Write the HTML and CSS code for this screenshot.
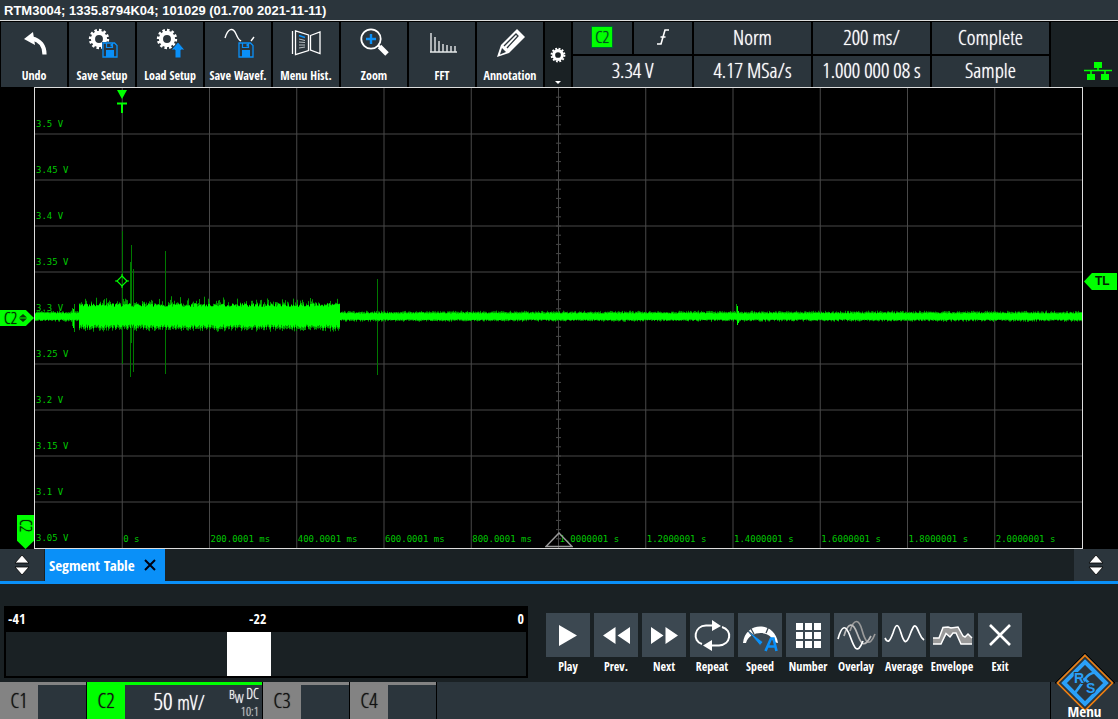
FILE: index.html
```html
<!DOCTYPE html>
<html lang="en">
<head>
<meta charset="utf-8">
<meta name="viewport" content="width=device-width, initial-scale=1">
<title>RTM3004 Oscilloscope</title>
<link rel="stylesheet" href="styles.css">
</head>
<body>
<svg class="defs" aria-hidden="true">
  <symbol id="gear" viewBox="0 0 24 24">
    <circle cx="12" cy="12" r="6.6" fill="none" stroke="currentColor" stroke-width="4.6"/>
    <circle cx="12" cy="12" r="9.6" fill="none" stroke="currentColor" stroke-width="3" pathLength="24" stroke-dasharray="1.1 .9"/>
  </symbol>
  <symbol id="floppy" viewBox="0 0 16 16">
    <rect width="16" height="16" class="plate"/>
    <path d="M1 1h11.500l2.500 2.500v11.500h-14z" fill="none" stroke="#0a90f8" stroke-width="1.300"/>
    <path d="M4.500 1v4.500h6v-4.500" fill="none" stroke="#0a90f8" stroke-width="1.200"/>
    <path d="M4 8h8v7h-8z" fill="#0a90f8"/>
    <path d="M8.500 2h1.500v2.500h-1.500z" fill="#0a90f8"/>
  </symbol>
  <symbol id="updown" viewBox="0 0 16 22">
    <path d="M8 1L15 9H1zM8 21L15 13H1z" fill="#fff" stroke="#000" stroke-width=".8"/>
  </symbol>
</svg>

<header class="title">RTM3004; 1335.8794K04; 101029 (01.700 2021-11-11)</header>

<nav class="toolbar">
  <button class="tool"><svg viewBox="0 0 66 44"><path d="M23 17L32 10L34 23z" fill="#fff"/><path d="M31 16.500C39 18 43.500 24 43.500 32.500" fill="none" stroke="#fff" stroke-width="4.200"/></svg>Undo</button>
  <button class="tool"><svg viewBox="0 0 66 44"><use href="#gear" x="19" y="6" width="22" height="22"/><use href="#floppy" x="33" y="20" width="16" height="16"/></svg>Save Setup</button>
  <button class="tool"><svg viewBox="0 0 66 44"><use href="#gear" x="19" y="6" width="22" height="22"/><path d="M41 20L48 28H44V36H38V28H34z" fill="#0a90f8" stroke="#2b353c" stroke-width="1"/></svg>Load Setup</button>
  <button class="tool"><svg viewBox="0 0 66 44"><path d="M20 16C23 6 28 5 31 12S35 18 36 19M46 19L49 15" fill="none" stroke="#fff" stroke-width="1.400"/><use href="#floppy" x="33" y="20" width="16" height="16"/></svg>Save Wavef.</button>
  <button class="tool"><svg viewBox="0 0 66 44"><path d="M19.500 9V32M22.500 9V32.500L35.500 28.500V13zM37.500 13.500L47 10V31.500L37.500 28z" fill="none" stroke="#fff" stroke-width="1.300"/><path d="M26 17l6 1.500M26 20l6 .5M26 23h6M26 26l6-1" stroke="#b8c0c4" stroke-width="1"/><path d="M26 13.500l6 2" stroke="#0a90f8" stroke-width="1.400"/></svg>Menu Hist.</button>
  <button class="tool"><svg viewBox="0 0 66 44"><circle cx="30" cy="17" r="9.700" fill="none" stroke="#fff" stroke-width="1.800"/><path d="M30 12v10M25 17h10" stroke="#0a90f8" stroke-width="2.400"/><path d="M37 23L39.500 25.500" stroke="#fff" stroke-width="2"/><path d="M38.500 24.500L46 32" stroke="#fff" stroke-width="5"/></svg>Zoom</button>
  <button class="tool"><svg viewBox="0 0 66 44"><path d="M21 30H48M22 11V30M26 15V30M30 19V30M34 22V30M38 23V30M42 24V30M46 24V30" stroke="#e4e7e8" stroke-width="1.400"/></svg>FFT</button>
  <button class="tool"><svg viewBox="0 0 66 44"><path d="M40 7L48 15L32 31L20 35L24 23z" fill="#fff"/><path d="M27 24L39 12L41 14L30 26" fill="none" stroke="#2b353c" stroke-width="1.300"/><path d="M25 26L29 30L23 32.500z" fill="#2b353c"/></svg>Annotation</button>
  <button class="config" aria-label="Configure toolbar"><svg viewBox="0 0 26 64"><use href="#gear" x="5" y="24" width="16" height="16"/><path d="M10 58h6l-3 3z" fill="#fff"/></svg></button>
  <div class="status">
    <button><span class="chip">C2</span></button>
    <button aria-label="Rising edge"><svg viewBox="0 0 14 18" class="edge"><path d="M1 16H5L9 2H13M4.500 9h5" fill="none" stroke="#fff" stroke-width="1.600"/></svg></button>
    <button>Norm</button>
    <button>200 ms/</button>
    <button>Complete</button>
    <button class="level">3.34 V</button>
    <button>4.17 MSa/s</button>
    <button>1.000 000 08 s</button>
    <button>Sample</button>
  </div>
  <div class="network"><svg viewBox="0 0 28 20" role="img" aria-label="Network connected"><path d="M10 1h8v6h-8zM3 13h8v6h-8zM17 13h8v6h-8z" fill="#0f0"/><path d="M0 9.500H28M14 6v4M7 9v5M21 9v5" stroke="#0f0" stroke-width="1.600"/></svg></div>
</nav>

<main class="scope">
  <div class="gutter">
    <div class="marker channel">C2<svg viewBox="0 0 8 8"><path d="M0 3.500h8l-4-3.500zM0 4.500h8l-4 3.500z" fill="#063c06"/></svg></div>
    <div class="marker offset">C2</div>
  </div>
  <div class="plot">
    <svg class="grid" id="grid"></svg>
    <div class="volts"><span>3.5 V</span><span>3.45 V</span><span>3.4 V</span><span>3.35 V</span><span>3.3 V</span><span>3.25 V</span><span>3.2 V</span><span>3.15 V</span><span>3.1 V</span><span>3.05 V</span></div>
    <div class="times"><span></span><span>0 s</span><span>200.0001 ms</span><span>400.0001 ms</span><span>600.0001 ms</span><span>800.0001 ms</span><span>1.0000001 s</span><span>1.2000001 s</span><span>1.4000001 s</span><span>1.6000001 s</span><span>1.8000001 s</span><span>2.0000001 s</span></div>
    <svg class="wave" viewBox="0 0 1047 460" preserveAspectRatio="none"><path id="dim"/><path id="spikes"/><path id="bright"/></svg>
    <svg class="pin trigger" viewBox="0 0 12 24"><path d="M1 1H11L6 10z" fill="#0f0"/><path d="M1 14.500H11M6 14V24" stroke="#0f0" stroke-width="2"/></svg>
    <svg class="pin point" viewBox="0 0 14 14"><path d="M7 2L12 7L7 12L2 7z" fill="none" stroke="#0f0" stroke-width="1.200"/><path d="M0 7h3M11 7h3M7 0v3M7 11v3" stroke="#0f0"/></svg>
    <svg class="pin reference" viewBox="0 0 28 16"><path d="M14 1L27 14.500H1z" fill="none" stroke="#999" stroke-width="1.500"/></svg>
  </div>
  <div class="gutter">
    <div class="marker level-mark">TL</div>
  </div>
</main>

<div class="tabs">
  <button class="updown" aria-label="Resize panel"><svg><use href="#updown"/></svg></button>
  <button class="tab">Segment Table<svg viewBox="0 0 12 12"><path d="M1 1L11 11M11 1L1 11" stroke="#001" stroke-width="2"/></svg></button>
  <button class="updown last" aria-label="Expand panel"><svg><use href="#updown"/></svg></button>
</div>

<section class="panel">
  <div class="segments">
    <div class="scale"><label for="segment">-41</label><div><output for="segment">-22</output><span>0</span></div></div>
    <input id="segment" type="range" min="-41" max="0" value="-22">
  </div>
  <div class="actions">
    <button><svg viewBox="0 0 44 44"><path d="M13 12L31 22.500L13 33z" fill="#fff"/></svg>Play</button>
    <button><svg viewBox="0 0 44 44"><path d="M9 22.500L21.500 14V31zM23.500 22.500L36 14V31z" fill="#fff"/></svg>Prev.</button>
    <button><svg viewBox="0 0 44 44"><path d="M9 14L21.500 22.500L9 31zM23.500 14L36 22.500L23.500 31z" fill="#fff"/></svg>Next</button>
    <button><svg viewBox="0 0 44 44"><path d="M12 31C2 28 4 13 16 12.500H24M32 14C43 17 41 32 29 32.500H21" fill="none" stroke="#fff" stroke-width="2"/><path d="M22 7L31 13L22 18zM22 27L13 32.500L22 38z" fill="#fff"/></svg>Repeat</button>
    <button><svg viewBox="0 0 44 44"><path d="M5 30C7 8 37 8 40 30L35.500 29C33 17 12 17 8 30z" fill="#fff"/><path d="M12 14l4 7M28 20l3-7" stroke="#3c4851" stroke-width="1.300"/><path d="M9 17L25 29L22 32.500z" fill="#0a90f8" stroke="#3c4851" stroke-width=".8"/><path d="M27.500 38L33 25.500H35.500L38.500 38M30 33.500H37" fill="none" stroke="#0a90f8" stroke-width="2.600"/></svg>Speed</button>
    <button><svg viewBox="0 0 44 44"><path d="M10 10h7v7h-7zM19 10h7v7h-7zM28 10h7v7h-7zM10 19h7v7h-7zM19 19h7v7h-7zM28 19h7v7h-7zM10 28h7v7h-7zM19 28h7v7h-7zM28 28h7v7h-7z" fill="#fff"/></svg>Number</button>
    <button><svg viewBox="0 0 44 44"><g fill="none" stroke-width="1.700"><path d="M16 18C20 5 25 6 28 17S35 36 41 21" stroke="#9a9a9a"/><path d="M10 23C14 9 19 9 23 20S30 36 37 23" stroke="#bbb"/><path d="M4 26C8 11 12 12 16 23S23 43 29 28" stroke="#fff"/></g></svg>Overlay</button>
    <button><svg viewBox="0 0 44 44"><path d="M3 25C6 31 8 28 11 20C14 10 16 10 19 20S24 31 27 24S32 9 35 15S38 24 42 27" fill="none" stroke="#fff" stroke-width="1.700"/></svg>Average</button>
    <button><svg viewBox="0 0 44 44"><path d="M3 25H9L13 14H28L33 23L35 24L38 21L42 25V31H31L26 20H23L20 24L17 21L11 31H3z" fill="#999"/><path d="M3 25H9L13 14.500L18 14L21 15L28 14L33 23L35 24L38 21L42 25M3 31H11L16 20.500L20 24L23 20H26L31 31H42" fill="none" stroke="#fff" stroke-width="1.500"/></svg>Envelope</button>
    <button><svg viewBox="0 0 44 44"><path d="M12 12L32 32M32 12L12 32" stroke="#fff" stroke-width="2.600"/></svg>Exit</button>
  </div>
</section>

<footer class="channels">
  <button class="channel-cell"><b>C1</b></button>
  <button class="channel-cell active"><b>C2</b><span class="vdiv">50 <small>mV/</small></span><span class="coupling"><span><span class="band">B<sub>W</sub></span> DC</span><span class="probe">10:1</span></span></button>
  <button class="channel-cell"><b>C3</b></button>
  <button class="channel-cell"><b>C4</b></button>
  <button class="menu"><svg viewBox="0 0 60 60"><path d="M30 0L60 30H0z" fill="#2b353c" stroke="#000"/><path d="M30 2.500L57.500 30L30 57.500L2.500 30z" fill="#2b353c" stroke="#f08010" stroke-width="1.600"/><path d="M30 9L51 30L30 51L9 30z" fill="#2b353c" stroke="#2aa0f8" stroke-width="4"/><path d="M19.500 19.500Q24 24 29 26T40.500 40.500M40.500 19.500Q34 20 30 26T19.500 40.500" fill="none" stroke="#2aa0f8" stroke-width="2.600"/><text x="19" y="30" class="logo">R</text><text x="31" y="40" class="logo">S</text></svg><span>Menu</span></button>
</footer>
<script src="scope.js"></script>
</body>
</html>
```

FILE: styles.css
```css
* { box-sizing: border-box; }
:root {
  --bar: #2b353c;
  --dark: #1a2124;
  --blue: #0a90f8;
  --green: #0f0;
  --narrow: "Open Sans Condensed", "Liberation Sans Narrow", "Noto Sans", sans-serif;
  --readout: "Open Sans Condensed Light", "Liberation Sans Narrow", "Open Sans Condensed", sans-serif;
}
body {
  margin: 0;
  min-height: 100vh;
  display: flex;
  flex-direction: column;
  background: #000;
  color: #fff;
  font-family: var(--narrow);
  font-size: 13px;
}
button {
  border: 0;
  padding: 0;
  margin: 0;
  background: var(--bar);
  color: inherit;
  font: inherit;
  white-space: nowrap;
}
svg { display: block; }
.defs { width: 0; height: 0; position: absolute; }
.plate { fill: var(--bar); }

.title {
  height: 21px;
  padding: 0 4px;
  background: var(--bar);
  border-bottom: 1px solid #ddd;
  font: bold 13px/21px "Liberation Sans", sans-serif;
}

.toolbar { display: flex; height: 66px; gap: 2px; padding: 1px 0 0 1px; }
.tool {
  flex: 0 1 66px;
  display: flex;
  flex-direction: column;
  align-items: center;
  font-weight: bold;
  font-size: 12px;
  line-height: 20px;
}
.tool svg { width: 66px; height: 44px; }
.config { width: 26px; background: var(--dark); }
.config svg { width: 26px; height: 64px; }
.status {
  flex: 1;
  display: grid;
  grid-template-columns: 1fr 1fr 2fr 2fr 2fr;
  grid-template-rows: 1fr 1fr;
  gap: 2px;
}
.status button { display: flex; align-items: center; justify-content: center; font-size: 21px; line-height: 28px; padding-bottom: 2px; }
.status button, .channel-cell, .marker {
  font-family: var(--readout);
  font-weight: normal;
  text-shadow: 0 0 1px currentColor;
}
.level { grid-column: span 2; }
.chip {
  width: 22px;
  border: 1px solid #063;
  background: var(--green);
  color: #042;
  font-size: 17px;
  line-height: 20px;
}
.edge { width: 14px; height: 18px; }
.network { width: 67px; background: var(--dark); display: flex; align-items: flex-end; justify-content: flex-end; padding: 6px; }
.network svg { width: 28px; height: 20px; }

.scope { flex: 1; min-height: 200px; display: grid; grid-template-columns: 34px 1fr 35px; }
.gutter { position: relative; }
.marker { position: absolute; background: var(--green); color: #020; white-space: nowrap; font-size: 16px; }
.channel {
  width: 34px;
  left: 0;
  top: calc(50% - 8px);
  display: flex;
  align-items: center;
  gap: 2px;
  padding-left: 4px;
  line-height: 16px;
  clip-path: polygon(0 0, 76% 0, 100% 50%, 76% 100%, 0 100%);
}
.channel svg { width: 8px; height: 8px; }
.offset {
  width: 17px;
  height: 34px;
  right: 0;
  bottom: 0;
  padding-top: 4px;
  writing-mode: vertical-rl;
  text-orientation: sideways;
  line-height: 17px;
  clip-path: polygon(0 0, 100% 0, 100% 76%, 50% 100%, 0 76%);
}
.level-mark {
  width: 33px;
  left: 1px;
  top: calc(42% - 8px);
  padding-left: 11px;
  font: bold 12px/17px "Liberation Sans", sans-serif;
  text-shadow: none;
  clip-path: polygon(0 50%, 24% 0, 100% 0, 100% 100%, 24% 100%);
}
.plot {
  position: relative;
  display: grid;
  grid-template-rows: minmax(0, 1fr);
  border: 1px solid #ddd;
  color: #00c800;
  font: 9px/12px "DejaVu Sans Mono", monospace;
}
.plot > .grid, .plot > .volts, .plot > .times, .plot > .wave { grid-area: 1 / 1; width: 100%; height: 100%; min-height: 0; }
.volts { display: grid; grid-template-rows: repeat(10, 1fr); align-items: end; padding-left: 1px; }
.volts span { padding-bottom: 4px; }
.times { display: grid; grid-template-columns: repeat(12, minmax(0, 1fr)); align-items: end; }
.times span { padding: 0 0 3px 1px; white-space: nowrap; }
.grid line { stroke: #484848; }
.wave path { fill: none; stroke-width: 1; }
#dim { stroke: #009800; }
#spikes { stroke: #007800; }
#bright { stroke: #0f0; }
.pin { position: absolute; }
.trigger { width: 12px; height: 24px; left: calc(8.333% - 6px); top: 1px; }
.point { width: 14px; height: 14px; left: calc(8.333% - 7px); top: calc(42% - 7px); }
.reference { width: 28px; height: 16px; left: calc(50% - 14px); bottom: 0; }

.tabs { display: flex; gap: 1px; height: 35px; background: var(--dark); border-bottom: 3px solid var(--blue); }
.updown { width: 44px; display: grid; place-items: center; }
.updown svg { width: 16px; height: 22px; }
.last { margin-left: auto; }
.tab { display: flex; align-items: center; gap: 9px; padding: 0 9px 0 4px; background: var(--blue); font-size: 15px; font-weight: bold; }
.tab svg { width: 12px; height: 12px; }

.panel { display: flex; align-items: flex-start; gap: 18px; height: 98px; padding: 22px 4px 0; background: var(--dark); }
.segments { flex: 0 1 524px; min-width: 200px; padding: 0 2px 2px; background: #000; }
.scale { display: grid; grid-template-columns: 19fr 22fr; font-size: 14px; font-weight: bold; line-height: 26px; padding: 0 2px; }
.scale div { display: flex; justify-content: space-between; padding-left: 2px; }
input[type="range"] { appearance: none; display: block; width: 100%; height: 44px; margin: 0; background: var(--dark); }
input[type="range"]::-webkit-slider-thumb { appearance: none; width: 44px; height: 44px; background: #fff; border-radius: 0; }
.actions { display: flex; gap: 4px; padding-top: 7px; }
.actions button { width: 44px; background: none; display: flex; flex-direction: column; align-items: center; font-size: 12px; line-height: 19px; font-weight: bold; }
.actions svg { width: 44px; height: 44px; background: #3c4851; }

.channels { display: flex; gap: 1px; height: 37px; background: #000; }
.channel-cell { width: 86px; display: flex; border-top: 3px solid #838383; font-size: 21px; }
.channel-cell b { width: 38px; line-height: 30px; height: 34px; background: #838383; color: #111; font-weight: inherit; }
.active { width: 175px; border-color: var(--green); }
.active b { background: var(--green); }
.vdiv { flex: 1; font-size: 24px; line-height: 32px; padding-left: 4px; }
.vdiv small { font-size: 20px; }
.coupling { display: flex; flex-direction: column; align-items: flex-end; padding-right: 3px; font-size: 14px; line-height: 17px; }
.band { font-size: 13px; }
.band sub { font-size: 13px; line-height: 1px; }
.probe { font-size: 13px; color: #ccc; }
.channels::before { content: ""; order: 1; flex: 1; background: var(--bar); }
.menu { order: 2; position: relative; width: 67px; font-size: 15px; font-weight: bold; display: flex; align-items: flex-end; justify-content: center; }
.menu svg { position: absolute; width: 60px; height: 60px; left: 4px; bottom: 6px; }
.menu span { position: relative; line-height: 15px; }
.logo { font: bold 14px "Liberation Sans", sans-serif; fill: #2aa0f8; stroke: #2b353c; stroke-width: 2px; paint-order: stroke; }
```

FILE: scope.js
```js
// Graticule: 12 x 10 divisions with fine ticks on the centre axis.
const grid = document.getElementById('grid');
let lines = '';
for (let i = 1; i < 12; i++) {
  const x = `${i * 100 / 12}%`;
  lines += `<line x1="${x}" x2="${x}" y1="0" y2="100%"/>`;
}
for (let i = 1; i < 10; i++) lines += `<line x1="0" x2="100%" y1="${i * 10}%" y2="${i * 10}%"/>`;
for (let i = 1; i < 50; i++) {
  lines += `<svg x="50%" y="${i * 2}%" overflow="visible"><line x1="-2.500" x2="2.500"/></svg>`;
}
grid.innerHTML = lines;

// Min/max envelope of the recorded segment, one column per sample.
let seed = 7;
const rnd = () => (seed = (seed * 16807) % 2147483647) / 2147483647;
const mid = 228.5;
let dim = '', bright = '';
for (let x = 0; x < 1047; x++) {
  const burst = x >= 44 && x < 305;
  const top = burst ? 9.5 + rnd() * 3.5 : 2.8 + rnd() * 1.2;
  const low = burst ? 8 + rnd() * 4 : 2.8 + rnd() * 1.2;
  const extra = burst ? Math.pow(rnd(), 4) * 7 : rnd() * 1.5;
  const px = x + 0.5;
  bright += `M${px} ${mid - top}V${mid + low}`;
  dim += `M${px} ${mid - top - extra - 0.5}V${mid + low + (burst ? 1.5 + rnd() * 2 : rnd() * 1.5)}`;
}
bright += 'M38.5 221V240M702.5 218V237M703.5 223V235';
dim += 'M39.5 216V244M37.5 220V238M701.5 216V230M87.500 190V257';
document.getElementById('dim').setAttribute('d', dim);
document.getElementById('bright').setAttribute('d', bright);
document.getElementById('spikes').setAttribute('d',
  'M87.500 143V276M95.500 174V289M96.500 157V255M98.500 181V284M130.500 163V286M342.500 191V287');
```
